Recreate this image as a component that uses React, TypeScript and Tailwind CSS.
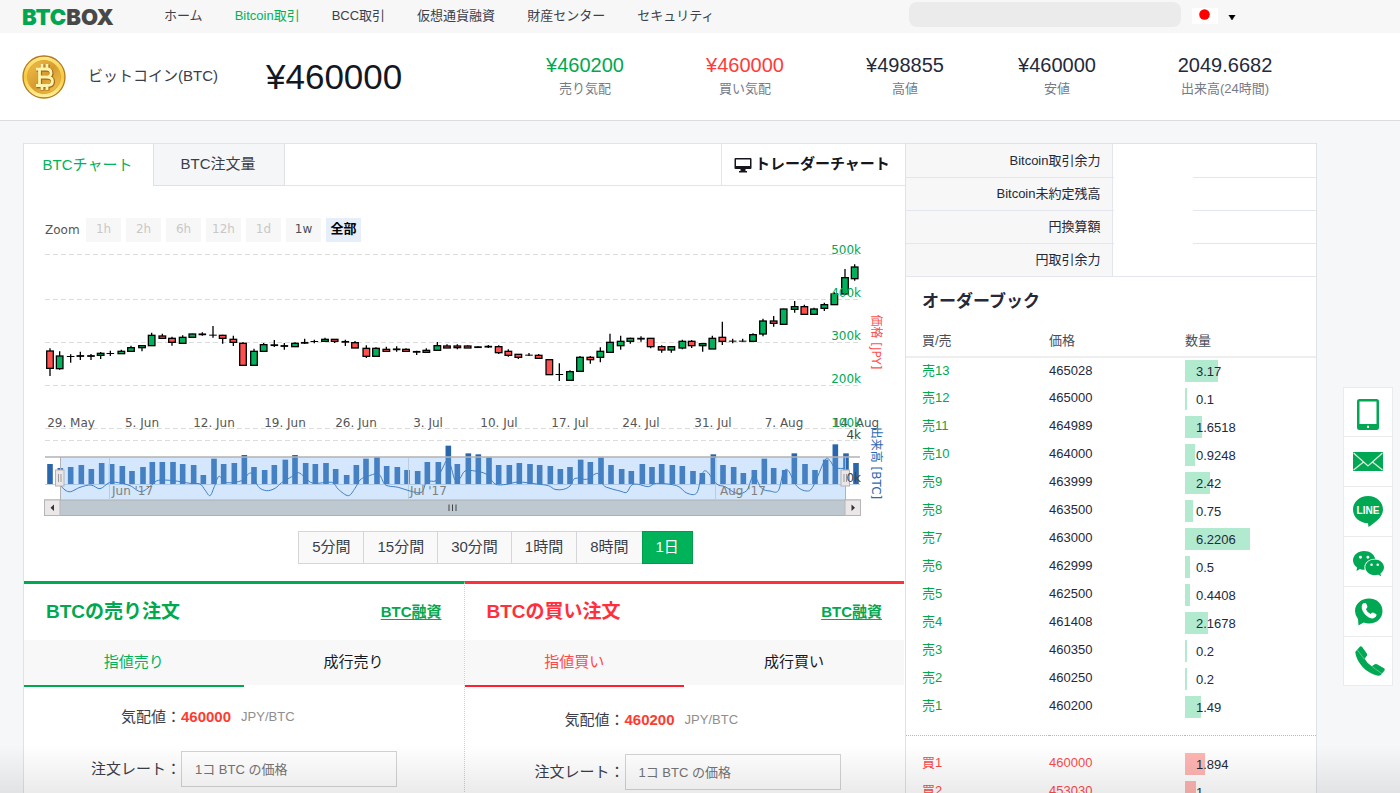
import React from 'react';
import { IoLogoWechat } from 'react-icons/io5';

type Candle = [number, number, number, number, number, 'g' | 'r' | 'd'];
type Pair = [number, number];

/* Series are stored in thirds of a pixel, in two halves with their own origin. */
const CANDLES_A: Candle[] = [
  [60, 325, 333, 385, 408, 'r'], [89, 334, 348, 386, 389, 'g'], [122, 343, 349, 350, 368, 'd'], [151, 335, 347, 349, 360, 'd'],
  [183, 342, 347, 349, 360, 'd'], [212, 336, 340, 346, 357, 'g'], [241, 332, 340, 341, 348, 'd'], [274, 329, 334, 341, 341, 'g'],
  [303, 317, 323, 334, 334, 'g'], [336, 315, 317, 323, 334, 'g'], [365, 278, 286, 317, 317, 'g'], [397, 281, 288, 295, 295, 'r'],
  [426, 290, 295, 307, 317, 'r'], [458, 286, 292, 310, 310, 'g'], [487, 281, 282, 292, 292, 'g'], [517, 277, 282, 284, 287, 'd'],
  [549, 258, 285, 286, 293, 'd'], [578, 284, 286, 295, 311, 'r'], [610, 287, 298, 307, 318, 'r'], [639, 306, 310, 376, 376, 'r'],
  [672, 326, 334, 376, 376, 'g'], [701, 309, 314, 334, 334, 'g'], [733, 300, 314, 317, 321, 'd'], [763, 309, 317, 319, 329, 'd'],
  [795, 307, 310, 320, 320, 'g'], [824, 296, 307, 310, 312, 'd'], [853, 299, 304, 305, 310, 'd'], [885, 293, 298, 304, 304, 'g'],
  [914, 297, 298, 304, 309, 'r'], [946, 299, 304, 307, 318, 'd'], [975, 303, 308, 324, 324, 'r'], [1009, 316, 325, 349, 354, 'r'],
  [1038, 322, 325, 349, 349, 'g'], [1069, 320, 328, 334, 334, 'r'], [1100, 319, 327, 329, 335, 'd'], [1128, 325, 328, 334, 334, 'r'],
  [1160, 332, 334, 337, 345, 'd'], [1189, 325, 331, 337, 337, 'g'], [1222, 306, 317, 331, 331, 'g'], [1251, 313, 318, 324, 324, 'r'],
];

const CANDLES_B: Candle[] = [
  [22, 313, 318, 323, 328, 'r'], [53, 316, 318, 324, 324, 'r'], [84, 319, 320, 323, 324, 'd'], [115, 315, 319, 321, 324, 'd'],
  [146, 316, 320, 338, 342, 'r'], [175, 328, 334, 346, 350, 'r'], [205, 342, 343, 352, 357, 'r'], [237, 339, 345, 346, 348, 'd'],
  [266, 342, 346, 355, 355, 'r'], [298, 358, 359, 404, 404, 'r'], [328, 370, 403, 404, 423, 'd'], [360, 391, 395, 421, 421, 'g'],
  [390, 348, 352, 394, 394, 'g'], [421, 348, 352, 359, 371, 'r'], [451, 322, 334, 352, 367, 'g'], [480, 281, 307, 337, 337, 'g'],
  [512, 287, 304, 317, 329, 'g'], [541, 293, 295, 304, 311, 'g'], [573, 289, 295, 297, 305, 'd'], [602, 294, 295, 320, 325, 'r'],
  [635, 316, 320, 330, 338, 'r'], [664, 319, 320, 330, 338, 'g'], [697, 299, 304, 324, 328, 'g'], [725, 300, 304, 317, 324, 'r'],
  [758, 309, 311, 317, 335, 'g'], [787, 287, 295, 327, 327, 'g'], [817, 245, 292, 304, 315, 'r'], [848, 296, 303, 304, 310, 'd'],
  [878, 296, 303, 304, 305, 'd'], [909, 280, 284, 304, 304, 'g'], [939, 236, 243, 282, 289, 'g'], [971, 228, 243, 250, 260, 'r'],
  [1001, 206, 207, 253, 253, 'g'], [1034, 183, 200, 208, 218, 'g'], [1063, 194, 200, 223, 223, 'r'], [1092, 203, 207, 223, 223, 'g'],
  [1123, 188, 194, 205, 213, 'g'], [1153, 157, 162, 194, 194, 'g'], [1185, 87, 113, 162, 165, 'g'], [1214, 73, 81, 116, 122, 'g'],
];

const VOLUME_A: Pair[] = [
  [60, 672], [91, 684], [122, 681], [154, 675], [184, 687], [215, 669], [245, 672], [277, 678], [306, 693], [339, 681], [367, 666],
  [397, 666], [429, 666], [458, 672], [491, 675], [520, 705], [552, 656], [581, 672], [613, 669], [643, 645], [672, 681],
  [704, 690], [733, 675], [766, 659], [795, 645], [827, 669], [856, 672], [888, 669], [917, 687], [950, 705], [979, 675],
  [1008, 656], [1041, 651], [1070, 678], [1102, 681], [1131, 690], [1163, 693], [1192, 666], [1225, 666], [1255, 617],
];

const VOLUME_B: Pair[] = [
  [22, 672], [55, 640], [85, 643], [117, 652], [146, 675], [178, 675], [208, 669], [240, 672], [269, 675], [301, 678],
  [331, 687], [360, 681], [392, 659], [421, 666], [453, 652], [483, 675], [515, 687], [544, 693], [577, 672], [606, 681],
  [635, 672], [667, 675], [697, 678], [729, 693], [757, 699], [790, 643], [819, 675], [851, 681], [880, 699], [913, 690],
  [943, 656], [971, 684], [1004, 690], [1033, 640], [1065, 672], [1095, 690], [1127, 659], [1156, 613], [1188, 640], [1218, 669],
];

const LINE_A: Pair[] = [
  [91, 735], [105, 750], [122, 755], [150, 742], [183, 735], [210, 746], [238, 728], [265, 728], [300, 737], [333, 755],
  [365, 735], [385, 721], [430, 722], [480, 730], [510, 732], [525, 750], [540, 767], [553, 740], [567, 709], [590, 728],
  [635, 722], [655, 702], [668, 703], [685, 740], [710, 752], [735, 745], [755, 728], [785, 710], [805, 698], [825, 712],
  [850, 730], [905, 727], [925, 748], [955, 767], [975, 745], [990, 720], [1010, 710], [1045, 702], [1062, 730], [1075, 738],
  [1105, 742], [1140, 753], [1175, 757], [1190, 725], [1218, 722], [1235, 690],
];

const LINE_B: Pair[] = [
  [-5, 660], [15, 720], [30, 715], [45, 693], [75, 693], [110, 703], [135, 732], [170, 733], [205, 726], [260, 732], [295, 737],
  [315, 748], [340, 748], [360, 738], [375, 715], [410, 718], [435, 702], [447, 704], [460, 735], [480, 745], [510, 753],
  [530, 757], [545, 735], [565, 733], [595, 740], [620, 730], [680, 737], [710, 759], [740, 759], [755, 705], [770, 694],
  [800, 732], [825, 740], [860, 760], [890, 752], [905, 715], [915, 709], [935, 745], [960, 753], [985, 752], [1000, 697],
  [1015, 692], [1040, 738], [1070, 753], [1090, 738], [1125, 660], [1140, 662], [1155, 683], [1185, 685],
];

const ax = (v: number) => v / 3 + 30;
const bx = (v: number) => v / 3 + 450;
const py = (v: number) => v / 3 + 240;

const CANDLES = [
  ...CANDLES_A.map((c) => ({ x: ax(c[0]), c })),
  ...CANDLES_B.map((c) => ({ x: bx(c[0]), c })),
];
const VOLUMES = [...VOLUME_A.map(([x, y]) => [ax(x), py(y)]), ...VOLUME_B.map(([x, y]) => [bx(x), py(y)])];

function smoothPath(points: number[][]) {
  let d = `M${points[0][0]} ${points[0][1]}`;
  for (let i = 0; i < points.length - 1; i++) {
    const p0 = points[Math.max(0, i - 1)];
    const p1 = points[i];
    const p2 = points[i + 1];
    const p3 = points[Math.min(points.length - 1, i + 2)];
    d += `C${p1[0] + (p2[0] - p0[0]) / 6} ${p1[1] + (p2[1] - p0[1]) / 6} ${p2[0] - (p3[0] - p1[0]) / 6} ${p2[1] - (p3[1] - p1[1]) / 6} ${p2[0]} ${p2[1]}`;
  }
  return d;
}

const NAV_PATH = smoothPath([...LINE_A.map(([x, y]) => [ax(x), py(y)]), ...LINE_B.map(([x, y]) => [bx(x), py(y)])]);

const DATES: [string, number][] = [
  ['29. May', 71], ['5. Jun', 142], ['12. Jun', 214], ['19. Jun', 285], ['26. Jun', 356], ['3. Jul', 428],
  ['10. Jul', 499], ['17. Jul', 570], ['24. Jul', 641], ['31. Jul', 713], ['7. Aug', 784], ['14. Aug', 856],
];

function PriceChart() {
  return (
    <svg viewBox="24 242 881 278" className="block w-full font-['DejaVu_Sans','Noto_Sans_CJK_JP',sans-serif] text-[12px]" role="img" aria-label="BTC price and volume">
      {[254, 299, 342, 385, 428, 440].map((y) => (
        <line key={y} x1="45" x2="860" y1={y + 0.5} y2={y + 0.5} stroke="#dcdcdc" strokeDasharray="5 3" />
      ))}
      {DATES.map(([label, x]) => (
        <text key={label} x={x} y="427" textAnchor="middle" fill="#555">{label}</text>
      ))}
      {VOLUMES.map(([x, y]) => (
        <rect key={x} x={x - 2.8} y={y} width="5.6" height={484.3 - y} fill="#2a66ab" />
      ))}
      {CANDLES.map(({ x, c }) => (
        <g key={x} stroke="#000">
          <line x1={x} x2={x} y1={py(c[1])} y2={py(c[4])} strokeWidth="1.3" />
          {c[5] === 'd' ? (
            <line x1={x - 3.8} x2={x + 3.8} y1={py((c[2] + c[3]) / 2)} y2={py((c[2] + c[3]) / 2)} strokeWidth={c[3] - c[2] > 1 ? 1.8 : 1} />
          ) : (
            <rect x={x - 3.3} y={py(c[2])} width="6.6" height={(c[3] - c[2]) / 3} fill={c[5] === 'g' ? '#00b05a' : '#ff5050'} strokeWidth="1.3" />
          )}
        </g>
      ))}
      <line x1="45" x2="860" y1="484.5" y2="484.5" stroke="#c3d3e4" />
      <rect x="60" y="457" width="785" height="43" fill="#7cb5f5" fillOpacity="0.33" />
      <g stroke="#b9cde2">
        <line x1="109.5" x2="109.5" y1="458" y2="499" />
        <line x1="408.5" x2="408.5" y1="458" y2="499" />
        <line x1="715.5" x2="715.5" y1="458" y2="499" />
      </g>
      <path d={NAV_PATH} fill="none" stroke="#3f7fc4" />
      <g fill="#808080">
        <text x="112" y="495">Jun '17</text>
        <text x="410" y="495">Jul '17</text>
        <text x="720" y="495">Aug '17</text>
      </g>
      <path d="M45 457H860" stroke="#b2b2b2" strokeWidth="1.5" />
      <path d="M60.5 457V500M845.5 457V500" stroke="#b2b2b2" />
      <rect x="44.5" y="500" width="816" height="15.5" fill="#bdc8d1" stroke="#b0b0b0" />
      <rect x="44.5" y="500" width="15.5" height="15.5" fill="#ebe7e8" stroke="#b5b5b5" />
      <rect x="845" y="500" width="15.5" height="15.5" fill="#ebe7e8" stroke="#b5b5b5" />
      <path d="M54 504.5V511L50.5 507.8ZM851.5 504.5V511L855 507.8Z" fill="#333" />
      <path d="M449 504.5V511M452.5 504.5V511M456 504.5V511" stroke="#444" />
      <g stroke="#b2b1b6" fill="#ebe7e8">
        <rect x="55.5" y="470" width="8.5" height="16" />
        <rect x="841" y="470" width="8.5" height="16" />
        <path d="M58.5 474V482M61 474V482M844 474V482M846.5 474V482" stroke="#999" />
      </g>
      <g textAnchor="end" fill="#00a854">
        <text x="861" y="254">500k</text>
        <text x="861" y="297">400k</text>
        <text x="861" y="340">300k</text>
        <text x="861" y="383">200k</text>
        <text x="861" y="427">100k</text>
      </g>
      <g textAnchor="end" fill="#444">
        <text x="861" y="439">4k</text>
        <text x="861" y="482">0k</text>
      </g>
      <text transform="translate(872 342) rotate(90)" textAnchor="middle" fill="#ff5050">価格 [JPY]</text>
      <text transform="translate(872 463) rotate(90)" textAnchor="middle" fill="#3069ae">出来高 [BTC]</text>
    </svg>
  );
}

function BitcoinCoin() {
  return (
    <svg viewBox="0 0 44 44" className="size-11" aria-hidden="true">
      <defs>
        <linearGradient id="rim" x1="0" y1="0" x2="0" y2="1">
          <stop offset="0" stopColor="#ffe88a" />
          <stop offset="0.5" stopColor="#f7c93c" />
          <stop offset="1" stopColor="#fff0a0" />
        </linearGradient>
        <linearGradient id="face" x1="0" y1="0" x2="1" y2="1">
          <stop offset="0" stopColor="#f2c24a" />
          <stop offset="0.5" stopColor="#d69b30" />
          <stop offset="1" stopColor="#f4c852" />
        </linearGradient>
      </defs>
      <circle cx="22" cy="22" r="21" fill="url(#rim)" stroke="#b27a1c" strokeWidth="1.3" />
      <circle cx="22" cy="22" r="16.5" fill="url(#face)" stroke="#e0a92f" />
      <g fill="none" stroke="#a36a12" strokeWidth="4.2" transform="translate(0.5 0.6)">
        <path d="M17.5 13V31M14 14H24.5Q29 14 29 18T24.5 22H18M24.5 22Q30.5 22 30.5 26.2T25 30.5H14M20 9V14M25 9V14M20 30V35M25 30V35" />
      </g>
      <g fill="none" stroke="#fff3ae" strokeWidth="2.8">
        <path d="M17.5 13V31M14 14H24.5Q29 14 29 18T24.5 22H18M24.5 22Q30.5 22 30.5 26.2T25 30.5H14M20 9V14M25 9V14M20 30V35M25 30V35" />
      </g>
    </svg>
  );
}

const NAV = ['ホーム', 'Bitcoin取引', 'BCC取引', '仮想通貨融資', '財産センター', 'セキュリティ'];

function TopNav() {
  return (
    <header className="flex h-[33px] items-center bg-[#f7f7f7] pb-0.5 pl-[22px] text-[13px] text-[#3d414b]">
      <a href="#" className="w-[142px] pt-0.5 font-['Inter',sans-serif] text-[22px] font-black leading-none text-[#484848]">
        <span className="text-[#00a651]">BTC</span>BOX
      </a>
      <nav className="flex gap-8 whitespace-nowrap">
        {NAV.map((item) => (
          <a key={item} href="#" className={item === 'Bitcoin取引' ? 'text-[#00b259]' : ''}>{item}</a>
        ))}
      </nav>
      <div className="ml-auto mr-[164px] flex items-center">
        <div className="mb-0.5 h-[25px] w-[272px] rounded-lg bg-[#ebebeb]" />
        <button type="button" aria-label="言語" className="ml-[11px] flex items-center gap-2.5">
          <svg viewBox="0 0 26 16" className="h-4 w-[26px]"><rect width="26" height="16" fill="#fff" /><circle cx="12.5" cy="6.5" r="5.3" fill="#f00" /></svg>
          <svg viewBox="0 0 8 5" className="mt-1 h-[5px] w-2"><path d="M0.8 0H7.2L4 5Z" fill="#000" stroke="#000" strokeWidth="0.5" /></svg>
        </button>
      </div>
    </header>
  );
}

const STATS = [
  { value: '¥460200', label: '売り気配', cls: 'w-40 text-[#00a84f]' },
  { value: '¥460000', label: '買い気配', cls: 'w-40 text-[#ff3b3b]' },
  { value: '¥498855', label: '高値', cls: 'w-40 text-[#25293a]' },
  { value: '¥460000', label: '安値', cls: 'w-36 text-[#25293a]' },
  { value: '2049.6682', label: '出来高(24時間)', cls: 'w-48 text-[#25293a]' },
];

function Ticker() {
  return (
    <section className="flex h-22 items-center border-b border-[#dcdcdc] bg-white pl-[22px]">
      <BitcoinCoin />
      <h1 className="ml-[22px] w-[178px] whitespace-nowrap text-[15px] text-[#3a3e4b]">ビットコイン(BTC)</h1>
      <p className="whitespace-nowrap text-[35px] leading-none text-[#14171f]">¥460000</p>
      <dl className="ml-auto mr-[79px] flex pb-1 text-center">
        {STATS.map((s) => (
          <div key={s.label} className={`flex flex-col-reverse ${s.cls}`}>
            <dt className="text-[13px] leading-5 text-[#767b88]">{s.label}</dt>
            <dd className="text-[20px] leading-7">{s.value}</dd>
          </div>
        ))}
      </dl>
    </section>
  );
}

const ZOOMS = ['1h', '2h', '6h', '12h', '1d', '1w', '全部'];

function zoomClass(label: string) {
  if (label === '全部') return 'bg-[#e6eefa] font-bold text-black text-[13px]';
  if (label === '1w') return 'bg-[#f7f7f7] text-[#4a4e5c]';
  return 'bg-[#f7f7f7] text-[#c8c8c8]';
}

const PERIODS = ['5分間', '15分間', '30分間', '1時間', '8時間', '1日'];

function ChartPanel() {
  return (
    <section>
      <div className="flex h-[43px] border-t border-[#e3e5e8] text-[15px]">
        <button type="button" className="w-[129px] pr-0.5 text-[#00b259]">BTCチャート</button>
        <button type="button" className="w-[132px] border border-t-0 border-[#dfe1e5] bg-[#f5f6f8] pr-0.5 text-[#3a3e4b]">BTC注文量</button>
        <div className="flex-1 border-b border-[#e3e5e8]" />
        <a href="#" className="flex w-[184px] items-center gap-[3px] border-b border-l border-[#e3e5e8] pl-3 font-bold text-[#15171c]">
          <svg viewBox="0 0 18 16" className="h-4 w-[18px]" aria-hidden="true">
            <path fillRule="evenodd" d="M1.5 1H16.5Q17.5 1 17.5 2V11Q17.5 12 16.5 12H1.5Q0.5 12 0.5 11V2Q0.5 1 1.5 1ZM2 2.5V9H16V2.5ZM6.5 12H11.5V14H13V15.5H5V14H6.5Z" fill="#15171c" />
          </svg>
          トレーダーチャート
        </a>
      </div>
      <div className="flex h-14 items-end gap-[5px] pl-[21px] font-['DejaVu_Sans','Noto_Sans_CJK_JP',sans-serif] text-[12px]">
        <span className="w-9 leading-6 text-[#555]">Zoom</span>
        {ZOOMS.map((z) => (
          <button key={z} type="button" className={`h-6 w-[35px] whitespace-nowrap pb-0.5 ${zoomClass(z)}`}>{z}</button>
        ))}
      </div>
      <PriceChart />
      <div className="flex justify-center pb-[17px] pl-[62px] pt-[11px] text-[15px] text-[#3a3e4b]">
        <div className="flex h-[33px]">
          {PERIODS.map((p) => (
            <button
              key={p}
              type="button"
              className={p === '1日' ? 'border border-[#009c4b] bg-[#00b259] px-[13px] text-white' : 'border border-r-0 border-[#d4d6d9] bg-[#f9f9f9] px-[13px]'}
            >
              {p}
            </button>
          ))}
        </div>
      </div>
    </section>
  );
}

type OrderProps = {
  id: string; title: string; tabs: [string, string]; price: string;
  main: string; titleColor: string; tabColor: string; body: string; label: string;
};

function OrderPanel({ id, title, tabs, price, main, titleColor, tabColor, body, label }: OrderProps) {
  return (
    <section className={`min-w-0 flex-1 border-t-3 ${main}`}>
      <div className="flex h-14 items-center justify-between px-[22px]">
        <h2 className={`text-[19px] font-bold ${titleColor}`}>{title}</h2>
        <a href="#" className="text-[15px] font-bold text-[#00a84f] underline underline-offset-2">BTC融資</a>
      </div>
      <div className="flex h-[47px] text-[15px]">
        <button type="button" className={`flex-1 border-b-2 bg-[#f8f8f8] ${tabColor}`}>{tabs[0]}</button>
        <button type="button" className="mb-0.5 flex-1 bg-[#f8f8f8] text-[#16181d]">{tabs[1]}</button>
      </div>
      <div className={body}>
        <p className="flex items-center text-[15px] leading-6 text-[#3a3e4b]">
          <span className={`text-right ${label}`}>気配値：</span>
          <strong className="text-[#ff3b30]">{price}</strong>
          <span className="ml-2.5 text-[13px] text-[#8e8e8e]">JPY/BTC</span>
        </p>
        <div className="mt-[22px] flex items-center text-[15px] text-[#3a3e4b]">
          <label htmlFor={id} className={`text-right ${label}`}>注文レート：</label>
          <input id={id} type="text" placeholder="1コ BTC の価格" className="h-9 w-[216px] border border-[#d4d4d4] bg-white px-[13px] text-[13px] placeholder:text-[#757575]" />
        </div>
      </div>
    </section>
  );
}

const ACCOUNT = ['Bitcoin取引余力', 'Bitcoin未約定残高', '円換算額', '円取引余力'];

const SELLS: [string, string, string][] = [
  ['売13', '465028', '3.17'], ['売12', '465000', '0.1'], ['売11', '464989', '1.6518'], ['売10', '464000', '0.9248'],
  ['売9', '463999', '2.42'], ['売8', '463500', '0.75'], ['売7', '463000', '6.2206'], ['売6', '462999', '0.5'],
  ['売5', '462500', '0.4408'], ['売4', '461408', '2.1678'], ['売3', '460350', '0.2'], ['売2', '460250', '0.2'], ['売1', '460200', '1.49'],
];

const BUYS: [string, string, string][] = [['買1', '460000', '1.894'], ['買2', '453030', '1']];

function BookRow({ row, sideCls, priceCls, barCls }: { row: [string, string, string]; sideCls: string; priceCls: string; barCls: string }) {
  return (
    <tr className="h-7">
      <td className={`p-0 pb-px pl-4 ${sideCls}`}>{row[0]}</td>
      <td className={`p-0 pb-px ${priceCls}`}>{row[1]}</td>
      <td className="p-0">
        <div className="relative h-[22px] pl-[11px] leading-6">
          <span className={`absolute inset-y-0 left-0 ${barCls}`} style={{ width: Math.max(2, Math.round(Number(row[2]) * 10.5)) }} />
          <span className="relative">{row[2]}</span>
        </div>
      </td>
    </tr>
  );
}

function OrderBook() {
  return (
    <aside className="w-[412px] shrink-0 border border-b-0 border-[#dfe2e7] bg-white text-[13px] text-[#25293a]">
      <div className="relative">
        <table className="w-full border-collapse">
          <tbody>
            {ACCOUNT.map((a) => (
              <tr key={a} className="h-[33px] border-b border-[#e3e6ee]">
                <th scope="row" className="w-[206px] border-r border-[#e3e6ee] bg-[#f7f7f7] p-0 pr-[11px] text-right font-normal">{a}</th>
                <td className="p-0" />
              </tr>
            ))}
          </tbody>
        </table>
        <div className="absolute bottom-1 left-[208px] top-0.5 w-[79px] bg-white" />
      </div>
      <h2 className="pb-3 pl-4 pt-[13px] text-[17px] font-bold leading-6">オーダーブック</h2>
      <table className="w-full table-fixed border-collapse leading-5">
        <thead>
          <tr className="h-[31px] border-b-2 border-[#eeeeee] text-left text-[#4a4e59]">
            <th className="w-[143px] p-0 pl-4 font-normal">買/売</th>
            <th className="w-[136px] p-0 font-normal">価格</th>
            <th className="p-0 font-normal">数量</th>
          </tr>
        </thead>
        <tbody>
          {SELLS.map((r) => (
            <BookRow key={r[0]} row={r} sideCls="text-[#00a84f]" priceCls="" barCls="bg-[#b2ead0]" />
          ))}
        </tbody>
        <tbody>
          <tr className="h-[15px] border-b border-dotted border-[#b8b8b8]"><td colSpan={3} className="p-0" /></tr>
          <tr className="h-3.5"><td colSpan={3} className="p-0" /></tr>
          {BUYS.map((r) => (
            <BookRow key={r[0]} row={r} sideCls="text-[#ff4a4a]" priceCls="text-[#ff4a4a]" barCls="bg-[#ffb6b3]" />
          ))}
        </tbody>
      </table>
    </aside>
  );
}

const CONTACTS: { name: string; icon: React.ReactNode }[] = [
  {
    name: 'モバイル',
    icon: (
      <svg viewBox="0 0 22 31" className="h-[31px] w-[22px]">
        <path fillRule="evenodd" fill="#00a854" d="M2.5 0H19.5Q22 0 22 2.5V28.5Q22 31 19.5 31H2.5Q0 31 0 28.5V2.5Q0 0 2.5 0ZM2.5 2.5V25H19.5V2.5ZM10 26.8V29H12V26.8Z" />
      </svg>
    ),
  },
  {
    name: 'メール',
    icon: (
      <svg viewBox="0 0 30 19" className="mb-1 h-[19px] w-[30px]">
        <rect width="30" height="19" fill="#00a854" />
        <path d="M0.5 1L15 14L29.5 1M0.5 18L10.5 10M29.5 18L19.5 10" fill="none" stroke="#dceedd" strokeWidth="1.3" />
      </svg>
    ),
  },
  {
    name: 'LINE',
    icon: (
      <svg viewBox="0 0 30 31" className="mb-1 h-[31px] w-[30px]">
        <path d="M15 0C23.5 0 30 6 30 13.5C30 20 24 25.500 15.500 31L15 27.200C6.500 27.200 0 21 0 13.500S6.500 0 15 0Z" fill="#00a854" />
        <text x="15" y="17.5" textAnchor="middle" fill="#fff" className="font-['Liberation_Sans',sans-serif] text-[10px] font-bold">LINE</text>
      </svg>
    ),
  },
  { name: 'WeChat', icon: <IoLogoWechat className="size-[31px] text-[#00a854]" /> },
  {
    name: 'WhatsApp',
    icon: (
      <svg viewBox="0 0 29 28" className="mb-1 h-7 w-[29px]">
        <path d="M15 0.500C23 0.500 28.500 6 28.500 13S23 25.500 15 25.500Q12 25.500 9.500 24.500L4.500 27.500L4 21Q1 17.500 1 13C1 6 7 0.500 15 0.500Z" fill="#00a854" />
        <path d="M9.300 5.200L11.300 5Q12.200 5.200 12.600 6.200L13.400 8.600Q13.500 9.500 12.900 10.100L11.900 11.200Q13 14 16.600 16L18 14.800Q18.700 14.300 19.500 14.700L22 16Q22.700 16.500 22.500 17.300Q22 20 19 20.400Q15 20.600 11.300 16.800Q7.600 12.800 7.700 8.600Q7.900 6.200 9.300 5.200Z" fill="#fff" />
      </svg>
    ),
  },
  {
    name: '電話',
    icon: (
      <svg viewBox="0 0 30 30" className="mb-1 ml-1 size-[30px]">
        <path d="M0.200 6L5 0.500Q6 -0.200 7 0.800L11.800 7.500Q12.500 8.800 11.700 10L9.600 12.800Q12 17.300 16.800 20.300L19.800 18.200Q20.900 17.600 22 18.200L29 22.300Q30.200 23.200 29.500 24.500L26 28.800Q24.500 30 22 29.600C11.500 27 1.500 17 0.200 6Z" fill="#00a854" />
        <path d="M2.300 3.800L9.300 13.200M16.800 20.300L27 27.800" stroke="#7fd3a8" strokeWidth="0.700" fill="none" />
      </svg>
    ),
  },
];

function ContactBar() {
  return (
    <aside className="fixed bottom-[107px] right-[7px] w-[50px] border border-b-0 border-[#ebebeb] bg-white">
      {CONTACTS.map((c) => (
        <a key={c.name} href="#" aria-label={c.name} className="flex h-[50px] items-center justify-center border-b border-[#ebebeb] pt-1 first:h-[49px] last:h-[49px]">
          {c.icon}
        </a>
      ))}
    </aside>
  );
}

export default function App() {
  return (
    <div className="h-screen min-w-[1240px] overflow-hidden bg-[#f6f7f9] font-['Liberation_Sans','Noto_Sans_CJK_JP',sans-serif]">
      <TopNav />
      <Ticker />
      <main className="flex pl-[23px] pr-[83px] pt-[22px]">
        <div className="min-w-0 flex-1 border-l border-[#dfe2e7] bg-white">
          <ChartPanel />
          <div className="flex pr-px">
            <OrderPanel
              id="sell-rate" title="BTCの売り注文" tabs={['指値売り', '成行売り']} price="460000"
              main="border-t-[#00a84f] border-r border-dotted border-r-[#cfcfcf] [border-top-style:solid]"
              titleColor="text-[#00a84f]" tabColor="border-[#00a84f] text-[#00b259]" body="pt-[18px] pb-10" label="w-[157px]"
            />
            <OrderPanel
              id="buy-rate" title="BTCの買い注文" tabs={['指値買い', '成行買い']} price="460200"
              main="border-t-[#ff2f3c]"
              titleColor="text-[#ff2f3c]" tabColor="border-[#ff1f2f] text-[#ff4a4a]" body="pt-[21px] pb-10" label="w-[160px]"
            />
          </div>
        </div>
        <OrderBook />
      </main>
      <ContactBar />
      <div className="pointer-events-none fixed inset-x-0 bottom-0 h-12 bg-linear-to-b from-transparent to-black/8" />
    </div>
  );
}
